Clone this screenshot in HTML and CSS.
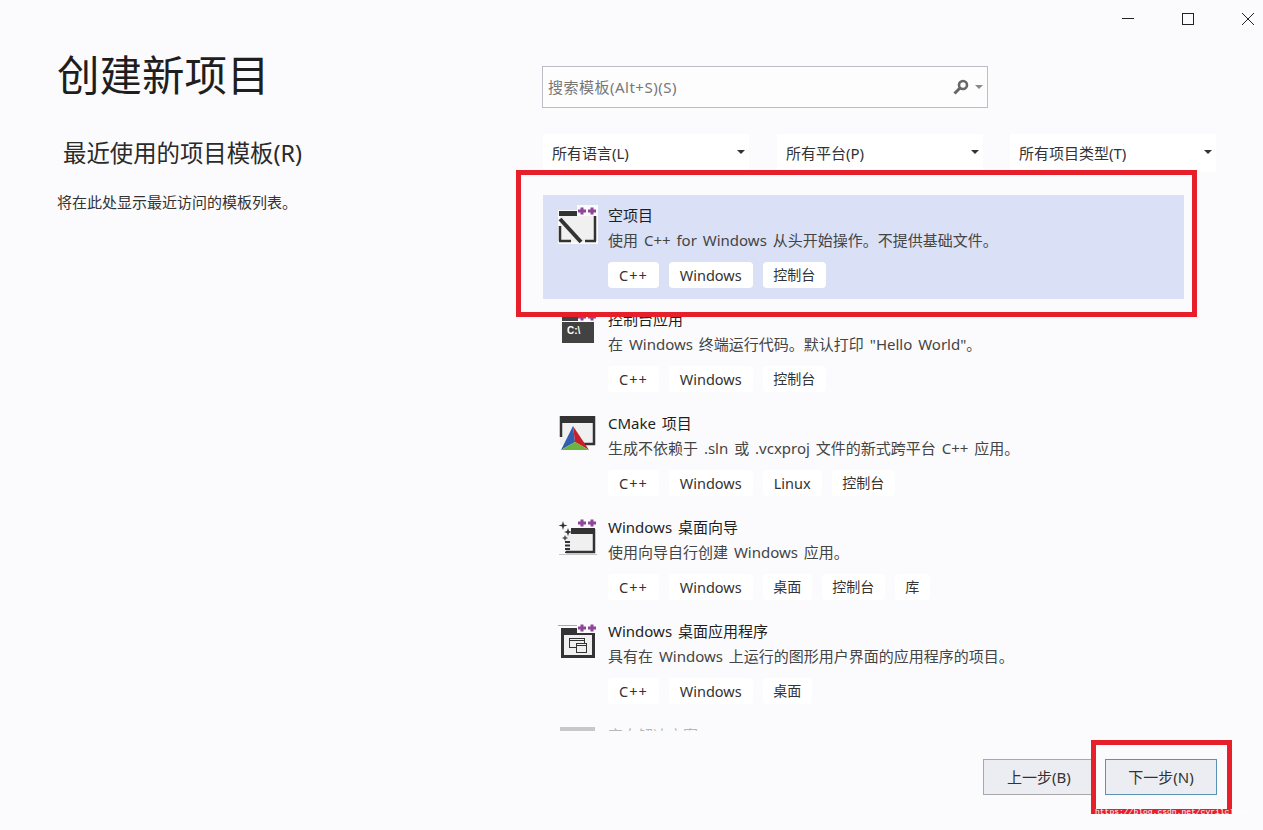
FILE: index.html
```html
<!DOCTYPE html>
<html lang="zh-CN">
<head>
    <meta charset="UTF-8">
    <title>创建新项目</title>
    <link rel="stylesheet" href="styles.css">
</head>
<body>
    <div class="window">
        <div class="caption">
            <svg class="caption-icon" viewBox="0 0 12 12"><path d="M0 5.5H12"/></svg>
            <svg class="caption-icon" viewBox="0 0 12 12"><rect x="0.5" y="0.5" width="11" height="11"/></svg>
            <svg class="caption-icon" viewBox="0 0 12 12"><path d="M0 0L12 12M12 0L0 12"/></svg>
        </div>

        <div class="main">
            <div class="recent">
                <h1>创建新项目</h1>
                <h2>最近使用的项目模板(R)</h2>
                <p>将在此处显示最近访问的模板列表。</p>
            </div>

            <div class="browse">
                <div class="search">
                    <span class="search-text">搜索模板(Alt+S)(S)</span>
                    <svg class="search-icon" viewBox="0 0 16 16"><circle cx="10" cy="6" r="4" fill="none" stroke="#666" stroke-width="2.6"/><path d="M7 9L1.500 14.500" stroke="#666" stroke-width="3"/></svg>
                    <span class="arrow arrow-light"></span>
                </div>

                <div class="filters">
                    <div class="filter"><span>所有语言(L)</span><span class="arrow"></span></div>
                    <div class="filter"><span>所有平台(P)</span><span class="arrow"></span></div>
                    <div class="filter filter-type"><span>所有项目类型(T)</span><span class="arrow"></span></div>
                </div>

                <div class="templates">
                    <div class="template selected">
                        <svg class="template-icon" viewBox="0 0 40 40">
                            <rect x="0" y="5" width="40" height="34" fill="#fbfbfd"/>
                            <rect x="2" y="7" width="36" height="30" fill="#f0f0f0"/>
                            <path d="M1 8.500H38" stroke="#333" stroke-width="5"/>
                            <path d="M2 36V21M1 36H13M27 36H38M37 36V11" fill="none" stroke="#333" stroke-width="2.500"/>
                            <path d="M2 14L23 37" stroke="#333" stroke-width="4"/>
                            <rect x="19" y="0" width="21" height="11" fill="#fbfbfd"/>
                            <path d="M20 6H28M24 2.500V9.500M30 6H38M34 2.500V9.500" stroke="#8f4598" stroke-width="3"/>
                        </svg>
                        <div class="template-body">
                            <div class="template-title">空项目</div>
                            <div class="template-desc">使用 C++ for Windows 从头开始操作。不提供基础文件。</div>
                            <div class="tags"><span class="tag tag-cpp">C++</span><span class="tag">Windows</span><span class="tag tag-cjk">控制台</span></div>
                        </div>
                    </div>

                    <div class="template">
                        <svg class="template-icon" viewBox="0 0 40 40">
                            <rect x="4" y="8" width="32" height="26" fill="#424242"/>
                            <path d="M4 12.500H36" stroke="#fbfbfd" stroke-width="1"/>
                            <text x="9" y="25" class="console-text">C:\</text>
                            <rect x="20" y="3" width="20" height="10" fill="#fbfbfd"/>
                            <path d="M20 8H28M24 4.500V11.500M30 8H38M34 4.500V11.500" stroke="#8f4598" stroke-width="3"/>
                        </svg>
                        <div class="template-body">
                            <div class="template-title">控制台应用</div>
                            <div class="template-desc">在 Windows 终端运行代码。默认打印 "Hello World"。</div>
                            <div class="tags"><span class="tag tag-cpp">C++</span><span class="tag">Windows</span><span class="tag tag-cjk">控制台</span></div>
                        </div>
                    </div>

                    <div class="template">
                        <svg class="template-icon" viewBox="0 0 40 40">
                            <rect x="2" y="3" width="35" height="29" fill="#f0f0f0"/>
                            <path d="M2 6.500H37" stroke="#333" stroke-width="7"/>
                            <path d="M3 3V24M36 3V31H25" fill="none" stroke="#333" stroke-width="2.500"/>
                            <path d="M15 13L3 37L17 29Z" fill="#2f5fae"/>
                            <path d="M15 13L31 37L17 29Z" fill="#c6202a"/>
                            <path d="M3 37L17 29L31 37Z" fill="#6cb33f"/>
                        </svg>
                        <div class="template-body">
                            <div class="template-title">CMake 项目</div>
                            <div class="template-desc">生成不依赖于 .sln 或 .vcxproj 文件的新式跨平台 C++ 应用。</div>
                            <div class="tags"><span class="tag tag-cpp">C++</span><span class="tag">Windows</span><span class="tag">Linux</span><span class="tag tag-cjk">控制台</span></div>
                        </div>
                    </div>

                    <div class="template">
                        <svg class="template-icon" viewBox="0 0 40 40">
                            <rect x="1" y="37" width="38" height="1" fill="#c8c8c8"/>
                            <rect x="8" y="13" width="29" height="23" fill="#f0f0f0"/>
                            <path d="M13 14H37" stroke="#333" stroke-width="6"/>
                            <path d="M36 12V35H8" fill="none" stroke="#333" stroke-width="2.500"/>
                            <path d="M5 4L6 7.500L9.500 8.500L6 9.500L5 13L4 9.500L0.500 8.500L4 7.500Z" fill="#333"/>
                            <path d="M10 11L11 14L14 15L11 16L10 19L9 16L6 15L9 14Z" fill="#333"/>
                            <path d="M7 18L8 20L10 21L8 22L7 24L6 22L4 21L6 20Z" fill="#555"/>
                            <path d="M9.500 24V36" stroke="#333" stroke-width="5" stroke-dasharray="2 1.500"/>
                            <rect x="19" y="0" width="21" height="11" fill="#fbfbfd"/>
                            <path d="M20 6H28M24 2.500V9.500M30 6H38M34 2.500V9.500" stroke="#8f4598" stroke-width="3"/>
                        </svg>
                        <div class="template-body">
                            <div class="template-title">Windows 桌面向导</div>
                            <div class="template-desc">使用向导自行创建 Windows 应用。</div>
                            <div class="tags"><span class="tag tag-cpp">C++</span><span class="tag">Windows</span><span class="tag tag-cjk">桌面</span><span class="tag tag-cjk">控制台</span><span class="tag tag-cjk">库</span></div>
                        </div>
                    </div>

                    <div class="template">
                        <svg class="template-icon" viewBox="0 0 40 40">
                            <path d="M0 4.500H20" stroke="#aaa"/>
                            <rect x="3" y="7" width="34" height="30" fill="#f0f0f0"/>
                            <path d="M3 10.500H37" stroke="#333" stroke-width="7"/>
                            <path d="M4.500 7V35.500H35.500V7" fill="none" stroke="#333" stroke-width="3"/>
                            <rect x="11.500" y="17.500" width="15" height="9" fill="#f0f0f0" stroke="#333"/>
                            <path d="M11.500 19.500H26.500" stroke="#333"/>
                            <rect x="18.500" y="22.500" width="10" height="9" fill="#f0f0f0" stroke="#333"/>
                            <path d="M18.500 24.500H28.500" stroke="#333"/>
                            <rect x="19" y="1" width="21" height="11" fill="#fbfbfd"/>
                            <path d="M20 7H28M24 3.500V10.500M30 7H38M34 3.500V10.500" stroke="#8f4598" stroke-width="3"/>
                        </svg>
                        <div class="template-body">
                            <div class="template-title">Windows 桌面应用程序</div>
                            <div class="template-desc">具有在 Windows 上运行的图形用户界面的应用程序的项目。</div>
                            <div class="tags"><span class="tag tag-cpp">C++</span><span class="tag">Windows</span><span class="tag tag-cjk">桌面</span></div>
                        </div>
                    </div>

                    <div class="template template-faded">
                        <svg class="template-icon" viewBox="0 0 40 40">
                            <rect x="2" y="2" width="35" height="7" fill="#555"/>
                        </svg>
                        <div class="template-body">
                            <div class="template-title">空白解决方案</div>
                        </div>
                    </div>
                </div>

                <div class="actions">
                    <button class="btn">上一步(B)</button>
                    <button class="btn btn-next">下一步(N)</button>
                </div>
            </div>
        </div>

        <!-- red note boxes drawn on top of the dialog -->
        <div class="mark mark-list"></div>
        <div class="mark mark-next"></div>
        <div class="watermark">https://blog.csdn.net/cyrilcloud</div>
    </div>
</body>
</html>
```

FILE: styles.css
```css
* {
    box-sizing: border-box;
}

body {
    margin: 0;
    background-color: #fbfbfd;
    color: #1e1e1e;
    font-family: "Noto Sans", "Noto Sans CJK SC", sans-serif;
    font-size: 15px;
}

.window {
    position: relative;
    width: 1263px;
    height: 830px;
    overflow: hidden;
}

.caption {
    display: flex;
    justify-content: flex-end;
    gap: 48px;
    height: 38px;
    padding: 13px 9px 0 0;
}

.caption-icon {
    width: 12px;
    height: 12px;
    fill: none;
    stroke: #222;
    stroke-width: 1;
}

.main {
    display: flex;
}

.recent {
    width: 543px;
    padding-left: 57px;
}

h1 {
    margin: 8px 0 0;
    font-size: 42.5px;
    font-weight: 400;
    line-height: 58px;
}

h2 {
    margin: 33px 0 0 6px;
    font-size: 23.4px;
    font-weight: 400;
    line-height: 32px;
    color: #2a2a2a;
}

.recent p {
    margin: 22px 0 0;
    line-height: 22px;
    color: #333;
}

.browse {
    width: 674px;
}

.search {
    display: flex;
    align-items: center;
    width: 446px;
    height: 42px;
    margin: 28px 0 0 -1px;
    padding: 0 4px 0 5px;
    border: 1px solid #bdbdc5;
    background-color: #fdfdfe;
    color: #777;
}

.search-text {
    flex: 1;
    margin-bottom: 2px;
    letter-spacing: 0.5px;
}

.search-icon {
    width: 16px;
    height: 16px;
    margin-right: 6px;
}

.arrow {
    width: 0;
    height: 0;
    border-left: 4px solid transparent;
    border-right: 4px solid transparent;
    border-top: 4px solid #333;
}

.arrow-light {
    border-top-color: #888;
}

.filters {
    display: flex;
    gap: 28px;
    margin-top: 26px;
}

.filter {
    display: flex;
    justify-content: space-between;
    align-items: center;
    width: 206px;
    height: 38px;
    padding: 0 4px 2px 9px;
    background-color: #fff;
    color: #333;
}

.filter-type {
    margin-left: -1px;
}

.templates {
    width: 641px;
    height: 536px;
    margin-top: 23px;
    overflow: hidden;
}

.template {
    display: flex;
    gap: 10px;
    height: 104px;
    padding: 8px 0 0 15px;
}

.template.selected {
    background-color: #dae0f6;
}

.template-faded {
    opacity: 0.3;
}

.template-icon {
    flex: none;
    width: 40px;
    height: 40px;
    margin-top: 2px;
}

.console-text {
    font-family: "Liberation Sans", sans-serif;
    font-size: 10px;
    font-weight: 700;
    fill: #fff;
}

.template-title {
    line-height: 24px;
    word-spacing: 2px;
}

.template-desc {
    line-height: 26px;
    word-spacing: 2px;
    color: #444;
}

.tags {
    display: flex;
    gap: 10px;
    margin-top: 9px;
}

.tag {
    height: 26px;
    padding: 0 11px;
    border-radius: 4px;
    background-color: #fff;
    font-size: 14.5px;
    line-height: 26px;
    color: #333;
}

.tag-cpp {
    letter-spacing: 1px;
}

.tag-cjk {
    padding: 0 10.5px;
    font-size: 14px;
}

.actions {
    display: flex;
    gap: 10px;
    margin: 28px 0 0 440px;
}

.btn {
    width: 112px;
    height: 36px;
    padding: 0 0 2px;
    border: 1px solid #a8a8a8;
    background-color: #ecedf2;
    color: #333;
    font-family: inherit;
    font-size: 15px;
}

.btn-next {
    border-color: #5a93b5;
}

.mark {
    position: absolute;
    border: 5px solid #e71f2b;
}

.mark-list {
    left: 516px;
    top: 170px;
    width: 681px;
    height: 147px;
}

.mark-next {
    left: 1091px;
    top: 740px;
    width: 141px;
    height: 74px;
}

.watermark {
    position: absolute;
    left: 1095px;
    top: 808px;
    font-family: "Liberation Mono", monospace;
    font-size: 8px;
    line-height: 8px;
    color: #fff;
}
```
